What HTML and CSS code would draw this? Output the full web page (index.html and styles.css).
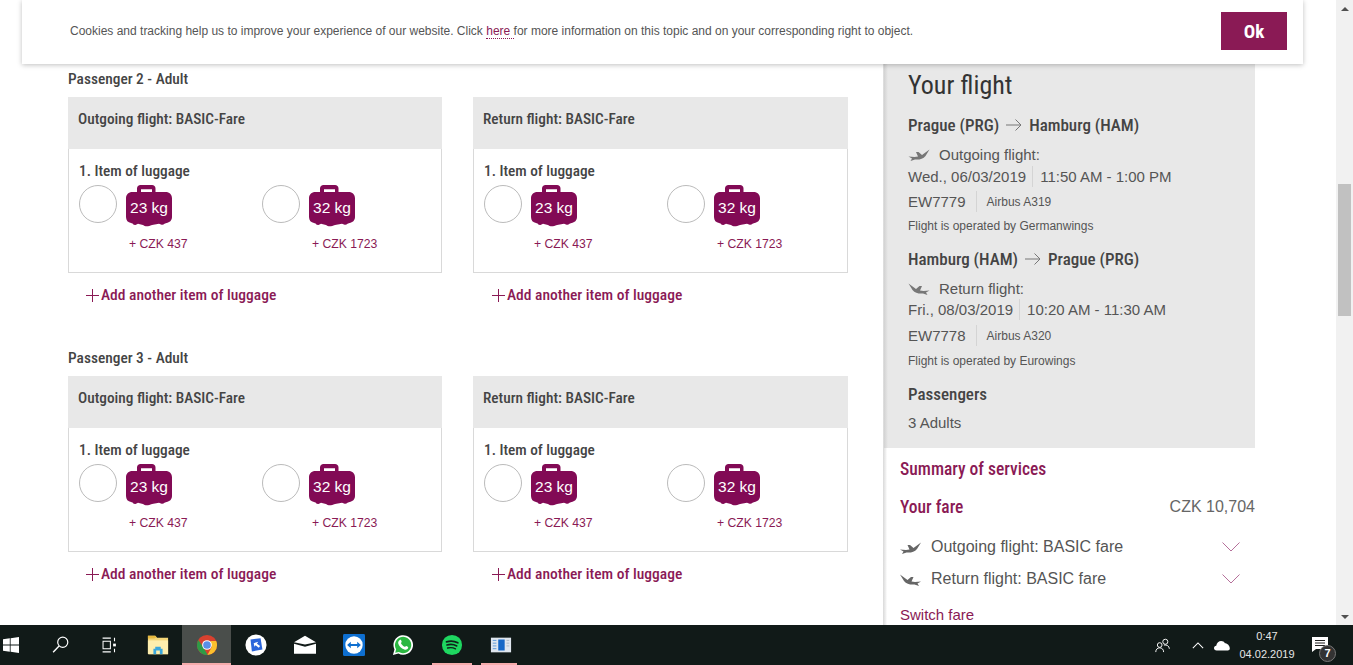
FILE: index.html
```html
<!DOCTYPE html>
<html lang="en">
<head>
<meta charset="utf-8">
<title>Your flight</title>
<link rel="stylesheet" href="styles.css">
</head>
<body>
<svg class="defs" width="0" height="0" aria-hidden="true">
  <symbol id="bag" viewBox="0 0 46 42">
    <path fill-rule="evenodd" d="M11 7V3.500C11 1.500 12.500 0 14.500 0H26C28 0 29.500 1.500 29.500 3.500V7H39.500C43.500 7 46 9.500 46 13.500V32C46 35.500 43.500 37.500 40.500 38L38.500 38.800C37.500 40 36 40 35 39.500L33 38.800L26 40C22 41.800 19 41.800 17 40L12 38.800L10 39.800C8.500 40.200 7.500 40 7 38.800L5 38C2 37.500 0 35.500 0 32V13.500C0 9.500 2.500 7 6.500 7ZM15 7H26V4.300H15Z"/>
  </symbol>
  <symbol id="plane" viewBox="0 0 21 13">
    <path d="M0 8.500L6 9L9.500 8.500L7.500 4H10L13.500 7L21 1.500L17 8C14.500 11 10.500 12 6.500 11.500L2 13L3.500 10.500Z"/>
  </symbol>
  <symbol id="chev" viewBox="0 0 18 10">
    <path d="M.5.500L9 9L17.500.5" fill="none" stroke="currentColor"/>
  </symbol>
</svg>

<div class="viewport">
  <main class="content">
    <section class="passenger">
      <h2 class="pax-title">Passenger 2 - Adult</h2>
      <div class="flights">
        <div class="flight-col">
          <div class="card">
            <div class="card-head">Outgoing flight: BASIC-Fare</div>
            <div class="card-body">
              <div class="item-title">1. Item of luggage</div>
              <div class="options">
                <div class="option"><span class="radio"></span><div class="bag-wrap"><div class="bag"><svg class="bag-icon"><use href="#bag"/></svg><span class="bag-kg">23 kg</span></div><div class="price">+ CZK 437</div></div></div>
                <div class="option"><span class="radio"></span><div class="bag-wrap"><div class="bag"><svg class="bag-icon"><use href="#bag"/></svg><span class="bag-kg">32 kg</span></div><div class="price">+ CZK 1723</div></div></div>
              </div>
            </div>
          </div>
          <div class="add"><span class="add-plus"></span>Add another item of luggage</div>
        </div>
        <div class="flight-col">
          <div class="card">
            <div class="card-head">Return flight: BASIC-Fare</div>
            <div class="card-body">
              <div class="item-title">1. Item of luggage</div>
              <div class="options">
                <div class="option"><span class="radio"></span><div class="bag-wrap"><div class="bag"><svg class="bag-icon"><use href="#bag"/></svg><span class="bag-kg">23 kg</span></div><div class="price">+ CZK 437</div></div></div>
                <div class="option"><span class="radio"></span><div class="bag-wrap"><div class="bag"><svg class="bag-icon"><use href="#bag"/></svg><span class="bag-kg">32 kg</span></div><div class="price">+ CZK 1723</div></div></div>
              </div>
            </div>
          </div>
          <div class="add"><span class="add-plus"></span>Add another item of luggage</div>
        </div>
      </div>
    </section>
    <section class="passenger">
      <h2 class="pax-title">Passenger 3 - Adult</h2>
      <div class="flights">
        <div class="flight-col">
          <div class="card">
            <div class="card-head">Outgoing flight: BASIC-Fare</div>
            <div class="card-body">
              <div class="item-title">1. Item of luggage</div>
              <div class="options">
                <div class="option"><span class="radio"></span><div class="bag-wrap"><div class="bag"><svg class="bag-icon"><use href="#bag"/></svg><span class="bag-kg">23 kg</span></div><div class="price">+ CZK 437</div></div></div>
                <div class="option"><span class="radio"></span><div class="bag-wrap"><div class="bag"><svg class="bag-icon"><use href="#bag"/></svg><span class="bag-kg">32 kg</span></div><div class="price">+ CZK 1723</div></div></div>
              </div>
            </div>
          </div>
          <div class="add"><span class="add-plus"></span>Add another item of luggage</div>
        </div>
        <div class="flight-col">
          <div class="card">
            <div class="card-head">Return flight: BASIC-Fare</div>
            <div class="card-body">
              <div class="item-title">1. Item of luggage</div>
              <div class="options">
                <div class="option"><span class="radio"></span><div class="bag-wrap"><div class="bag"><svg class="bag-icon"><use href="#bag"/></svg><span class="bag-kg">23 kg</span></div><div class="price">+ CZK 437</div></div></div>
                <div class="option"><span class="radio"></span><div class="bag-wrap"><div class="bag"><svg class="bag-icon"><use href="#bag"/></svg><span class="bag-kg">32 kg</span></div><div class="price">+ CZK 1723</div></div></div>
              </div>
            </div>
          </div>
          <div class="add"><span class="add-plus"></span>Add another item of luggage</div>
        </div>
      </div>
    </section>
  </main>

  <aside class="sidebar">
    <div class="panel">
      <h1 class="panel-title">Your flight</h1>
      <div class="route">Prague (PRG)<svg class="arrow" viewBox="0 0 16 12"><path d="M0 6H15M9.500.5L15 6L9.500 11.500" fill="none" stroke="#777"/></svg>Hamburg (HAM)</div>
      <div class="dir"><svg class="plane-sm"><use href="#plane"/></svg>Outgoing flight:</div>
      <div class="times times-first"><span class="date">Wed., 06/03/2019</span><span class="time">11:50 AM - 1:00 PM</span></div>
      <div class="flightno"><span class="fn">EW7779</span><span class="craft">Airbus A319</span></div>
      <div class="operator">Flight is operated by Germanwings</div>
      <div class="route route-next">Hamburg (HAM)<svg class="arrow" viewBox="0 0 16 12"><path d="M0 6H15M9.500.5L15 6L9.500 11.500" fill="none" stroke="#777"/></svg>Prague (PRG)</div>
      <div class="dir"><svg class="plane-sm flip"><use href="#plane"/></svg>Return flight:</div>
      <div class="times"><span class="date">Fri., 08/03/2019</span><span class="time">10:20 AM - 11:30 AM</span></div>
      <div class="flightno flightno-late"><span class="fn">EW7778</span><span class="craft">Airbus A320</span></div>
      <div class="operator operator-late">Flight is operated by Eurowings</div>
      <div class="route pax-head">Passengers</div>
      <div class="pax-count">3 Adults</div>
    </div>
    <div class="summary">
      <div class="sum-title">Summary of services</div>
      <div class="fare-row"><span class="fare-label">Your fare</span><span class="fare-price">CZK 10,704</span></div>
      <div class="fare-line"><svg class="plane-lg"><use href="#plane"/></svg><span class="fare-text">Outgoing flight: BASIC fare</span><svg class="chev"><use href="#chev"/></svg></div>
      <div class="fare-line"><svg class="plane-lg flip"><use href="#plane"/></svg><span class="fare-text">Return flight: BASIC fare</span><svg class="chev"><use href="#chev"/></svg></div>
      <div class="switch">Switch fare</div>
    </div>
  </aside>

  <div class="scrollbar">
    <div class="sb-btn"><svg class="sb-arrow" viewBox="0 0 8 4"><path d="M4 0L8 4H0Z"/></svg></div>
    <div class="sb-track"><div class="sb-thumb"></div></div>
    <div class="sb-btn"><svg class="sb-arrow" viewBox="0 0 8 4"><path d="M0 0H8L4 4Z"/></svg></div>
  </div>

  <div class="cookie">
    <p class="cookie-text">Cookies and tracking help us to improve your experience of our website. Click <a class="cookie-link">here </a>for more information on this topic and on your corresponding right to object.</p>
    <button class="ok">Ok</button>
  </div>
</div>

<footer class="taskbar">
  <div class="tb-start"><svg class="ic-win" viewBox="0 0 16 16"><path fill="#fff" d="M0 2.300L6.800 1.300V7.600H0ZM7.600 1.200L16 0V7.600H7.600ZM0 8.400H6.800V14.700L0 13.700ZM7.600 8.400H16V16L7.600 14.800Z"/></svg></div>
  <div class="tb-item"><svg class="ic" viewBox="0 0 24 24"><circle cx="15" cy="9" r="5.500" fill="none" stroke="#fff" stroke-width="1.300"/><path d="M11 13L4.500 20" stroke="#fff" stroke-width="1.500"/></svg></div>
  <div class="tb-item"><svg class="ic" viewBox="0 0 24 24"><path fill="none" stroke="#fff" stroke-width="1.100" d="M5 4.500H14M5 19.500H14M5.500 8H13.500V16H5.500Z"/><path stroke="#fff" stroke-width="1.200" d="M18 4V8M18 16V20"/><rect x="16.500" y="10.500" width="3" height="3" fill="#fff"/></svg></div>
  <div class="tb-item"><svg class="ic" viewBox="0 0 24 24"><path fill="#f4d679" d="M1 2H9L11 4H23V22H2C1.500 22 1 21.500 1 21Z"/><path fill="#fdeeae" d="M1 7H23V22H1Z"/><path fill="#e7b93f" d="M1 2H9L11 4H9L8 5H1Z"/><path fill="#3aa7dd" d="M7 22V16H9V14H15V16H17V22H14V18H10V22Z"/></svg></div>
  <div class="tb-item tb-active"><svg class="ic" viewBox="0 0 24 24"><circle cx="12" cy="12" r="11" fill="#d8412f"/><path fill="#2e9b47" d="M12 23A11 11 0 0 1 2.500 6.500L7.800 14.300L12.800 23Z"/><path fill="#fbc02d" d="M23 12A11 11 0 0 1 12.500 23L17 14.500L16 7.500H22A11 11 0 0 1 23 12Z"/><circle cx="12" cy="12" r="5.300" fill="#fff"/><circle cx="12" cy="12" r="4.200" fill="#5a8fe8"/></svg></div>
  <div class="tb-item"><svg class="ic" viewBox="0 0 24 24"><circle cx="12" cy="12" r="11.500" fill="#fff"/><path fill="#2c66db" d="M6 6L17 4.500L19 17L7.500 19Z"/><path fill="#fff" d="M9.500 10L14.500 8.500L13 10.500L16.500 13L15 15L11.500 12.300L10.300 14Z"/></svg></div>
  <div class="tb-item"><svg class="ic" viewBox="0 0 24 24"><path fill="#fff" d="M12 2L24 9L12 11.500L0 9Z"/><path fill="#fff" d="M0 10.500L12 14L24 10.500V21.500H0Z"/></svg></div>
  <div class="tb-item"><svg class="ic" viewBox="0 0 24 24"><rect width="24" height="24" rx="1.500" fill="#0e6fd0"/><circle cx="12" cy="12" r="9.500" fill="#fff"/><path fill="#0e6fd0" d="M4.500 12L8.500 8.500V10.800H15.500V8.500L19.500 12L15.500 15.500V13.200H8.500V15.500Z"/></svg></div>
  <div class="tb-item"><svg class="ic" viewBox="0 0 24 24"><path fill="#fff" d="M1 23L2.700 16.800A10.700 10.700 0 1 1 7 21.300Z"/><path fill="#2bb741" d="M3.500 20.500L4.500 16.600A8.900 8.900 0 1 1 7.500 19.600Z"/><path fill="#fff" d="M8.500 6.500C9.500 6 10 6.500 10.500 8.300C10.700 9 9.700 9.800 9.800 10.200C10.500 11.800 12.200 13.300 13.800 14C14.300 14.100 15 13 15.600 13.100C17.500 14 18 14.300 17.600 15.300C17 17 15.200 17.500 13.500 17C9.800 15.800 7.500 13 6.800 10.300C6.500 8.600 7.200 7.300 8.500 6.500Z"/></svg></div>
  <div class="tb-item tb-open-a"><svg class="ic" viewBox="0 0 24 24"><circle cx="12" cy="12" r="11" fill="#1ed760"/><path fill="none" stroke="#10201a" stroke-linecap="round" stroke-width="2" d="M6 8.500C10 7.300 14.500 7.500 18.300 9.500"/><path fill="none" stroke="#10201a" stroke-linecap="round" stroke-width="1.800" d="M6.500 12C10 11 14 11.300 17.200 13"/><path fill="none" stroke="#10201a" stroke-linecap="round" stroke-width="1.500" d="M7.200 15.300C10 14.500 13.300 14.800 15.800 16.200"/></svg></div>
  <div class="tb-item tb-open-b"><svg class="ic" viewBox="0 0 24 24"><rect x="1" y="4" width="22" height="16" fill="#dfe6ee"/><rect x="9" y="6" width="7" height="12" fill="#1668c7"/><path stroke="#5a97d8" d="M3 7H7M3 10H7M3 13H7M3 16H7"/><path stroke="#aab7c4" d="M18 7H21M18 10H21M18 13H21"/></svg></div>

  <div class="tray">
    <svg class="ic-tray tray-people" viewBox="0 0 16 16"><circle cx="11" cy="4" r="2.700" fill="none" stroke="#fff"/><circle cx="5" cy="7.500" r="2.500" fill="none" stroke="#fff"/><path fill="none" stroke="#fff" d="M.8 15C.8 12 2.800 10.500 5 10.500C7.200 10.500 9.200 12 9.200 15M9.500 7.500C12.500 7 15.300 8.500 15.300 11.500"/></svg>
    <svg class="ic-tray tray-up" viewBox="0 0 14 8"><path fill="none" stroke="#fff" stroke-width="1.200" d="M1 7L7 1L13 7"/></svg>
    <svg class="ic-tray tray-cloud" viewBox="0 0 18 12"><path fill="#fff" d="M3 11.500C1 11.500 0 10.300 0 9C0 7.500 1 6.500 2.500 6.400C3 3 5.500 1 8 1C10 1 11.500 2 12.300 3.600C15 3.500 17.800 6.500 17.800 9.300C17.800 10.600 16.800 11.500 15.500 11.500Z"/></svg>
    <div class="clock"><div>0:47</div><div>04.02.2019</div></div>
    <div class="notif"><svg class="notif-msg" viewBox="0 0 16 15"><path fill="#fff" d="M0 0H16V12H4L0 15Z"/><path stroke="#222" d="M3 3.500H13M3 6H13M3 8.500H13"/></svg><span class="notif-badge">7</span></div>
  </div>
</footer>
</body>
</html>
```
FILE: styles.css
```css
* { box-sizing: border-box; }
html, body { margin: 0; height: 100%; overflow: hidden; }
body {
  display: flex;
  flex-direction: column;
  height: 665px;
  background: #fff;
  color: #555;
  font-family: "Liberation Sans", Arial, sans-serif;
}
.defs { position: absolute; }

.viewport {
  position: relative;
  flex: 0 0 625px;
  display: flex;
  overflow: hidden;
}

/* Left column */
.content {
  flex: 0 0 883px;
  padding: 71px 0 0 68px;
}
.passenger { height: 279px; }
.pax-title, .card-head, .item-title, .add, .panel-title, .route, .sum-title, .fare-label, .ok {
  font-family: "Roboto Condensed", "Liberation Sans", sans-serif;
}
.pax-title, .card-head, .item-title, .add, .route, .sum-title, .fare-label {
  font-weight: 500;
}
.pax-title {
  margin: 0 0 10px;
  font-size: 15.400px;
  line-height: 16px;
  color: #444;
}
.flights { display: grid; grid-template-columns: 374px 375px; gap: 31px; }
.card {
  height: 176px;
  border: 1px solid #d9d9d9;
}
.card-head {
  height: 52px;
  margin: -1px -1px 0;
  padding: 13px 0 0 10px;
  background: #e8e8e8;
  font-size: 15.300px;
  line-height: 18px;
  color: #444;
}
.card-body { padding: 14px 0 0 10px; }
.item-title {
  font-size: 15.300px;
  line-height: 16px;
  color: #444;
}
.options { display: flex; margin-top: 6px; }
.option { flex: 0 0 183px; display: flex; }
.radio {
  flex: none;
  width: 38px;
  height: 38px;
  border: 1px solid #bbb;
  border-radius: 50%;
  margin-right: 9px;
}
.bag { position: relative; width: 46px; height: 42px; }
.bag-icon { display: block; width: 46px; height: 42px; fill: #820a55; }
.bag-kg {
  position: absolute;
  left: 0;
  right: 0;
  top: 14px;
  text-align: center;
  color: #fff;
  font-size: 15.500px;
  line-height: 18px;
}
.price {
  margin: 10px 0 0 3px;
  font-size: 12.200px;
  line-height: 14px;
  white-space: nowrap;
  color: #8a1a55;
}
.add {
  display: flex;
  align-items: center;
  height: 18px;
  margin: 13px 0 0 18px;
  font-size: 15.500px;
  color: #8a1a55;
}
.flight-col:last-child .add { margin-left: 19px; }
.add-plus {
  width: 13px;
  height: 13px;
  margin-right: 2px;
  background:
    linear-gradient(#8a1a55, #8a1a55) 0 6px / 13px 1px no-repeat,
    linear-gradient(#8a1a55, #8a1a55) 6px 0 / 1px 13px no-repeat;
}

/* Sidebar */
.sidebar {
  flex: 0 0 453px;
  padding-right: 81px;
  background: linear-gradient(90deg, #d9d9d9 0, #f2f2f2 3px, #fff 4px);
}
.panel {
  height: 448px;
  margin-left: 1px;
  padding: 70px 0 0 24px;
  background: linear-gradient(90deg, #d2d2d2 0, #e8e8e8 4px);
}
.panel-title {
  margin: 0;
  font-size: 26px;
  line-height: 30px;
  font-weight: 400;
  color: #333;
}
.route {
  display: flex;
  align-items: center;
  margin-top: 15px;
  font-size: 17px;
  line-height: 20px;
  color: #444;
}
.route-next { margin-top: 15px; }
.arrow { width: 16px; height: 12px; margin: 0 7px; }
.dir {
  display: flex;
  align-items: center;
  height: 20px;
  margin-top: 9px;
  font-size: 15px;
}
.plane-sm { width: 22px; height: 13px; margin-right: 9px; fill: #777; }
.flip { transform: scaleX(-1); }
.times { display: flex; align-items: center; height: 21px; margin-top: 1px; font-size: 15px; }
.times-first { margin-top: 2px; }
.date { padding-right: 6px; line-height: 21px; border-right: 1px solid #d4d4d4; }
.time { padding-left: 7px; }
.flightno { display: flex; align-items: center; height: 21px; margin-top: 4px; font-size: 15px; }
.flightno-late { margin-top: 5px; }
.fn { padding-right: 10px; line-height: 21px; border-right: 1px solid #d4d4d4; }
.craft { padding-left: 10px; font-size: 12px; }
.operator { margin-top: 6px; font-size: 12px; line-height: 16px; }
.operator-late { margin-top: 7px; }
.pax-head { margin-top: 15px; }
.pax-count { margin-top: 10px; font-size: 15px; line-height: 18px; }

.summary { padding: 11px 0 0 17px; }
.sum-title {
  font-size: 17.500px;
  line-height: 20px;
  color: #8a1a55;
}
.fare-row {
  display: flex;
  justify-content: space-between;
  align-items: center;
  margin-top: 18px;
  height: 20px;
}
.fare-label {
  font-size: 17.500px;
  color: #8a1a55;
}
.fare-price { font-size: 16px; color: #666; }
.fare-line { display: flex; align-items: center; height: 20px; margin-top: 12px; }
.fare-row + .fare-line { margin-top: 20px; }
.plane-lg { width: 21px; height: 13px; margin-right: 10px; fill: #666; }
.fare-text { flex: 1; font-size: 16px; color: #555; }
.chev { width: 18px; height: 10px; margin-right: 15px; color: #b5709a; }
.switch { margin-top: 17px; font-size: 15px; line-height: 18px; color: #8a1a55; }

/* Scrollbar */
.scrollbar {
  flex: 0 0 17px;
  display: flex;
  flex-direction: column;
  background: #f1f1f1;
}
.sb-btn { flex: 0 0 17px; display: flex; align-items: center; justify-content: center; }
.sb-arrow { width: 8px; height: 4px; fill: #505050; }
.sb-track { flex: 1; padding: 167px 2px 0; }
.sb-thumb { height: 132px; background: #c1c1c1; }

/* Cookie bar */
.cookie {
  position: absolute;
  left: 22px;
  top: 0;
  width: 1281px;
  height: 64px;
  padding: 12px 16px 0 48px;
  display: flex;
  justify-content: space-between;
  align-items: flex-start;
  background: #fff;
  box-shadow: 0 1px 5px rgba(0, 0, 0, .25);
}
.cookie-text { margin: 11px 0 0; font-size: 12px; line-height: 16px; color: #555; white-space: nowrap; }
.cookie-link { color: #8a1a55; border-bottom: 1px dotted #8a1a55; }
.ok {
  width: 66px;
  height: 38px;
  border: 0;
  padding: 0;
  background: #8a1a55;
  color: #fff;
  font-size: 19px;
  font-weight: 700;
}

/* Taskbar */
.taskbar {
  flex: 0 0 40px;
  display: flex;
  align-items: stretch;
  background: #111a18;
}
.tb-start { width: 35px; padding-left: 3px; display: flex; align-items: center; }
.ic-win { width: 16px; height: 16px; }
.tb-item { position: relative; width: 49px; display: flex; align-items: center; justify-content: center; }
.ic { width: 22px; height: 22px; }
.tb-active { background: #4a4e4b; }
.tb-active::after, .tb-open-a::after, .tb-open-b::after {
  content: "";
  position: absolute;
  bottom: 0;
  height: 2px;
  background: #f5abab;
}
.tb-active::after { left: 0; right: 0; }
.tb-open-a::after { left: 5px; right: 4px; }
.tb-open-b::after { left: 5px; right: 8px; }
.tray { margin-left: auto; display: flex; align-items: center; }
.ic-tray { flex: none; }
.tray-people { width: 15px; height: 15px; margin-right: 22px; }
.tray-up { width: 12px; height: 7px; margin-right: 10px; }
.tray-cloud { width: 16px; height: 11px; margin-right: 3px; }
.clock { width: 68px; text-align: center; color: #e6e6e6; font-size: 11px; line-height: 18px; }
.notif { position: relative; width: 52px; height: 40px; }
.notif-msg { position: absolute; left: 11px; top: 12px; width: 16px; height: 15px; }
.notif-badge {
  position: absolute;
  left: 18px;
  top: 20px;
  width: 17px;
  height: 17px;
  border-radius: 50%;
  background: #333;
  border: 1px solid #777;
  color: #fff;
  font-size: 11px;
  font-weight: 700;
  line-height: 15px;
  text-align: center;
}
```
